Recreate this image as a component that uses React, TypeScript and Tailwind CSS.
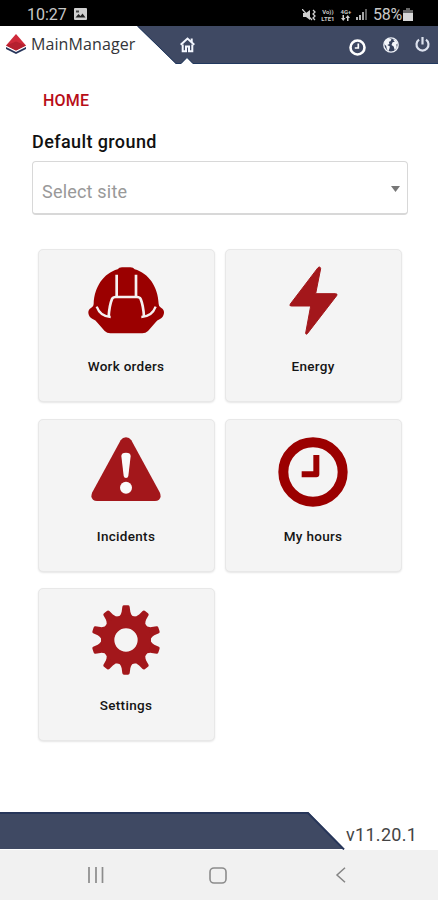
import React from 'react';

const teeth = [0, 36, 72, 108, 144, 180, 216, 252, 288, 324];

function HelmetIcon() {
  return (
    <svg width="84" height="76" viewBox="162 72 252 228" fill="none">
      <path
        d="M263 88Q267 82 276 82H301Q310 82 314 88C356 100 384 140 386 192Q386 200 393 203Q403 208 402 219Q400 233 390 237Q381 240 375 249L354 273Q347 280 337 280H241Q231 280 224 273L203 249Q197 240 188 237Q177 233 175 219Q174 208 184 203Q191 200 191 192C193 140 221 100 263 88Z"
        fill="#9b0000"
      />
      <g stroke="#f5f1f1" strokeLinejoin="round">
        <path d="M260 104V170M318 104V170" strokeWidth="8" />
        <path d="M236 230C237 213 240 192 246 177Q249 171 257 171H321Q329 171 332 177C338 192 341 213 342 230" strokeWidth="8" />
        <path d="M200 200Q211 230 242 231M377 200Q366 230 334 231" strokeWidth="7" />
      </g>
    </svg>
  );
}

function BoltIcon() {
  return (
    <svg width="84" height="76" viewBox="160 72 252 228">
      <path
        d="M301 83L218 192Q214 198 221 198H279L264 279Q264 285 269 281L357 167Q361 161 353 161H294L309 86Q308 78 301 83Z"
        fill="#a3171b"
        stroke="#a3171b"
        strokeWidth="3"
        strokeLinejoin="round"
      />
    </svg>
  );
}

function WarningIcon() {
  return (
    <svg width="84" height="76" viewBox="162 65 252 228">
      <path
        d="M272 84Q278 75 288 75Q298 75 304 84L389 240Q396 254 387 262Q382 266 375 266H201Q194 266 189 262Q180 254 187 240Z"
        fill="#a3171b"
      />
      <path d="M274 131Q274 121 288 121Q302 121 302 131L295 191Q294 197 288 197Q282 197 281 191Z" fill="#fafafa" />
      <circle cx="288" cy="226" r="18" fill="#fafafa" />
    </svg>
  );
}

function ClockIcon() {
  return (
    <svg width="84" height="76" viewBox="160 65 252 228" fill="none">
      <circle cx="286" cy="179" r="89" stroke="#9b0000" strokeWidth="30" />
      <path d="M296 128V186H252" stroke="#9b0000" strokeWidth="18" strokeLinejoin="round" />
    </svg>
  );
}

function GearIcon() {
  return (
    <svg width="84" height="76" viewBox="162 69 252 228">
      <g fill="#a3171b">
        {teeth.map((angle) => (
          <path
            key={angle}
            d="M262 113Q272 108 275 95L277 80Q278 76 282 76H294Q298 76 299 80L301 95Q304 108 314 113V140H262Z"
            transform={`rotate(${angle} 288 180)`}
          />
        ))}
      </g>
      <circle cx="288" cy="180" r="55" fill="none" stroke="#a3171b" strokeWidth="40" />
    </svg>
  );
}

const tiles = [
  { label: 'Work orders', icon: <HelmetIcon /> },
  { label: 'Energy', icon: <BoltIcon /> },
  { label: 'Incidents', icon: <WarningIcon /> },
  { label: 'My hours', icon: <ClockIcon /> },
  { label: 'Settings', icon: <GearIcon /> },
];

function StatusBar() {
  return (
    <div className="flex h-[26px] items-center bg-black pl-[27px] pr-[25px] text-[#c8c8c8]">
      <span className="mt-[3px] text-[16px] leading-none">10:27</span>
      <svg className="ml-[7px] mt-px" width="13" height="12" viewBox="0 0 13 12">
        <rect width="13" height="12" rx="1" fill="#cfcfcf" />
        <path d="M1.5 9.5L4.5 6L6.5 8L8.5 5.5L11.5 9.5Z" fill="#222" />
        <path d="M2 2.5H5V4.5H2Z" fill="#444" />
      </svg>
      <div className="ml-auto mt-[3px] flex items-center">
        <svg width="15" height="12" viewBox="0 0 15 12" fill="none" stroke="#d0d0d0">
          <path d="M1 4H4L8 1V11L4 8H1Z" fill="#d0d0d0" stroke="none" />
          <path d="M0 0L10 11" strokeWidth="1.2" />
          <path d="M11 1L13 3L11 5L13 7L11 9L13 11" strokeWidth="1.3" />
        </svg>
        <div className="ml-[3px] flex w-4 flex-col items-center text-[6px] font-bold leading-[7px]">
          <span>Vo))</span>
          <span>LTE1</span>
        </div>
        <div className="ml-[3px] flex w-[14px] flex-col items-center text-[6px] font-bold leading-[7px]">
          <span>4G+</span>
          <svg width="9" height="6" viewBox="0 0 9 6" fill="#d0d0d0">
            <path d="M1.500 0H3V3H4.500L2.250 6L0 3H1.500ZM6 6V3H4.500L6.750 0L9 3H7.500V6Z" />
          </svg>
        </div>
        <svg className="ml-[3px]" width="12" height="11" viewBox="0 0 12 11">
          <path d="M0 8H2V11H0ZM3 6H5V11H3Z" fill="#b8b8b8" />
          <path d="M6 3H8V11H6Z" fill="#a5a5a5" />
          <path d="M9 0H11V11H9Z" fill="#606060" />
        </svg>
        <span className="ml-[5px] text-[16px] leading-none tracking-[-0.2px]">58%</span>
        <svg className="ml-px" width="10" height="13" viewBox="0 0 10 13">
          <path d="M3 0H7V2H10V6H0V2H3Z" fill="#696969" />
          <path d="M0 5H10V13H0Z" fill="#d8d8d8" />
        </svg>
      </div>
    </div>
  );
}

function Header() {
  return (
    <header className="relative flex h-[38px] items-start bg-white">
      <svg className="absolute inset-0" width="438" height="38" viewBox="0 0 438 38">
        <path d="M137 0H438V38H193L187 31.5L181 38H176Z" fill="#3f4963" />
        <path d="M137.500 0L176 37.500H181L187 31.500L193 37.500H438" fill="none" stroke="#21395f" strokeWidth="1" />
      </svg>
      <svg className="relative ml-[6px] mt-[8px]" width="20" height="20" viewBox="0 0 20 20">
        <path d="M0 13L10 18L20 13V15L10 20L0 15Z" fill="#27355a" />
        <path d="M10 0L20 11.500L10 16.500L0 11.500Z" fill="#cf2a3a" />
        <path d="M0 11.500L10 7.500L20 11.500L10 16.500Z" fill="#b5202f" />
      </svg>
      <span className="relative ml-[5px] mt-[8px] font-['Open_Sans'] text-[16px] leading-[20px] tracking-[0.1px] text-[#343438]">
        MainManager
      </span>
      <svg className="absolute left-[180px] top-[11px]" width="15" height="16" viewBox="0 0 15 16" fill="none" stroke="#f4f7ff">
        <path d="M0.700 7.800L7.500 1.500L14.300 7.800" strokeWidth="2" />
        <path d="M11.700 1.500V5" strokeWidth="2" />
        <path d="M2.700 7.500V14.200H6V9.500H9V14.200H12.300V7.500" strokeWidth="2" />
      </svg>
      <svg className="absolute left-[349px] top-[13px]" width="17" height="17" viewBox="0 0 17 17" fill="none" stroke="white">
        <circle cx="8.500" cy="8.500" r="7" strokeWidth="2.600" />
        <path d="M9.300 4.500V9H5.800" strokeWidth="1.700" />
      </svg>
      <svg className="absolute left-[383px] top-[11px]" width="16" height="16" viewBox="0 0 15 15">
        <circle cx="7.500" cy="7.500" r="6.700" fill="#35405c" stroke="#eef1f8" strokeWidth="1.300" />
        <path d="M2 3L5 1.300L8 2L7 4L5.500 4.500L6 6.500L4 7.500L6.500 9L6 11L5 13.500L3.500 11L3 8.500L1 6.500ZM9 2L12 3L13.800 6L12.500 7L13 9.500L11 12.500L10 9L8 7.500L9 5L11 4.500Z" fill="#f3f5fa" />
      </svg>
      <svg className="absolute left-[415px] top-[11px]" width="15" height="15" viewBox="0 0 15 15" fill="none" stroke="#dce1ee" strokeWidth="2.200">
        <path d="M4 2.700A6 6 0 1 0 11 2.700" />
        <path d="M7.500 0V7.500" />
      </svg>
    </header>
  );
}

function NavBar() {
  return (
    <nav className="flex h-[50px] items-center bg-[#f1f1f1] pl-[87px]">
      <svg width="18" height="16" viewBox="0 0 18 16" stroke="#8c8c8c" strokeWidth="1.700">
        <path d="M2 0V16M9 0V16M15.500 0V16" />
      </svg>
      <svg className="ml-[104px]" width="18" height="17" viewBox="0 0 18 17" fill="none" stroke="#8c8c8c" strokeWidth="1.600">
        <rect x="1" y="1" width="16" height="15" rx="4" />
      </svg>
      <svg className="ml-[108px]" width="12" height="16" viewBox="0 0 12 16" fill="none" stroke="#858585" strokeWidth="1.500">
        <path d="M10 0.700L2 8L10 15.300" />
      </svg>
    </nav>
  );
}

export default function App() {
  return (
    <div className="flex h-[900px] w-[438px] flex-col overflow-hidden bg-white font-[Roboto,sans-serif]">
      <StatusBar />
      <Header />
      <main className="flex-1 px-[32px] pt-[27px]">
        <h1 className="ml-[11px] text-[16px] font-medium leading-[20px] tracking-[0.2px] text-[#b80d17]">HOME</h1>
        <h2 className="mt-[20px] text-[18px] font-medium leading-[22px] tracking-[0.4px] text-[#111]">Default ground</h2>
        <div className="mt-[8px] flex h-[54px] w-[376px] items-center justify-between rounded-[4px] border border-b-2 border-[#d8d8d8] pl-[9px] pr-[7px]">
          <span className="mt-[8px] text-[18px] leading-none tracking-[0.2px] text-[#999]">Select site</span>
          <svg className="mt-[3px]" width="9" height="6" viewBox="0 0 9 6">
            <path d="M0 0H9L4.500 6Z" fill="#777" />
          </svg>
        </div>
        <div className="ml-[5.500px] mt-[34px] grid w-[364px] grid-cols-2 gap-x-[10px] gap-y-[16.500px]">
          {tiles.map((tile) => (
            <div
              key={tile.label}
              className="flex h-[153px] flex-col items-center rounded-[5px] border border-[#e8e8e8] bg-[#f4f4f4] pt-[14px] shadow-[0_1px_2px_rgba(0,0,0,0.1)]"
            >
              {tile.icon}
              <span className="mt-[17px] text-[13.500px] font-medium leading-[18px] tracking-[0.3px] text-[#151515]">{tile.label}</span>
            </div>
          ))}
        </div>
      </main>
      <footer className="flex h-[38px] items-center">
        <svg width="345" height="38" viewBox="0 0 345 38">
          <path d="M0 0H308L344.500 37H0Z" fill="#3f4963" />
          <path d="M0 1H308L344 37.500" fill="none" stroke="#27365a" strokeWidth="1.800" />
        </svg>
        <span className="ml-px mt-[7px] text-[18px] leading-none tracking-[0.3px] text-[#444]">v11.20.1</span>
      </footer>
      <NavBar />
    </div>
  );
}
